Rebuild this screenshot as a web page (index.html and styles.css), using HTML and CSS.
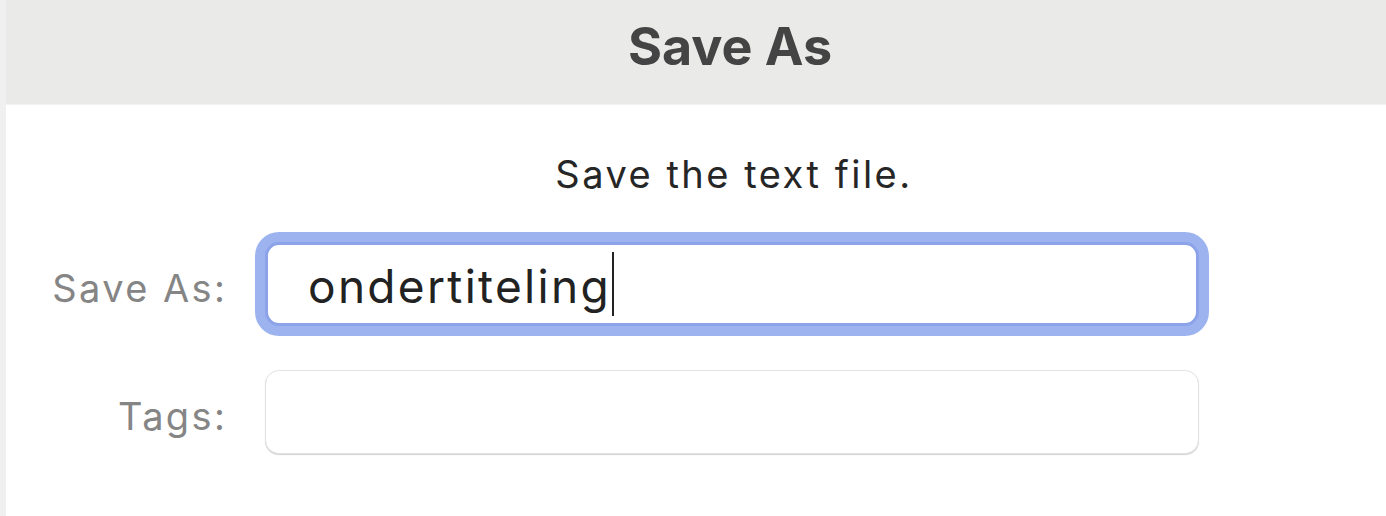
FILE: index.html
```html
<!DOCTYPE html>
<html lang="en">
<head>
<meta charset="utf-8">
<title>Save As</title>
<link rel="stylesheet" href="styles.css">
</head>
<body>
<div class="dialog">
  <header class="titlebar">
    <h1 class="title">Save As</h1>
  </header>
  <p class="message">Save the text file.</p>
  <form class="form">
    <label class="label" for="name">Save As:</label>
    <div class="field field-focused">
      <span class="value" id="name">ondertiteling</span><span class="caret"></span>
    </div>
    <label class="label" for="tags">Tags:</label>
    <div class="field" id="tags"></div>
  </form>
</div>
</body>
</html>
```
FILE: styles.css
```css
html, body {
  margin: 0;
  padding: 0;
}
body {
  width: 1386px;
  height: 516px;
  overflow: hidden;
  background: #f0f0f0;
  font-family: Inter, "Noto Sans", "DejaVu Sans", sans-serif;
}
.dialog {
  margin-left: 6px;
  height: 516px;
  background: #ffffff;
}
.titlebar {
  height: 105px;
  box-sizing: border-box;
  background: #eaeae8;
  border-bottom: 1px solid #f3f3f1;
  display: flex;
  align-items: center;
  justify-content: center;
  padding-left: 68px;
  padding-bottom: 10px;
}
.title {
  margin: 0;
  font-size: 52px;
  font-weight: 700;
  color: #444444;
  line-height: 1;
}
.message {
  margin: 0;
  padding-top: 49px;
  padding-left: 76px;
  text-align: center;
  font-size: 38px;
  letter-spacing: 2.5px;
  line-height: 40px;
  color: #262626;
}
.form {
  display: grid;
  grid-template-columns: 219px 934px;
  column-gap: 40px;
  row-gap: 44px;
  align-items: center;
  margin-top: 48px;
}
.label {
  text-align: right;
  font-size: 38px;
  letter-spacing: 2.4px;
  margin-right: -2.4px;
  color: #858585;
  padding-top: 8px;
}
.field {
  height: 84px;
  box-sizing: border-box;
  border: 1px solid #e3e3e3;
  border-radius: 14px;
  background: #ffffff;
  box-shadow: 0 1px 1px rgba(0, 0, 0, 0.18);
  display: flex;
  align-items: center;
  padding-left: 42px;
}
.field-focused {
  border: 3px solid #8ca3ea;
  box-shadow: 0 0 0 10px #9db3ef;
  padding-left: 40px;
}
.value {
  font-size: 46px;
  letter-spacing: 2.3px;
  color: #222222;
  padding-top: 4px;
}
.caret {
  display: inline-block;
  width: 2px;
  height: 64px;
  margin-left: 1px;
  background: #222222;
}
```
